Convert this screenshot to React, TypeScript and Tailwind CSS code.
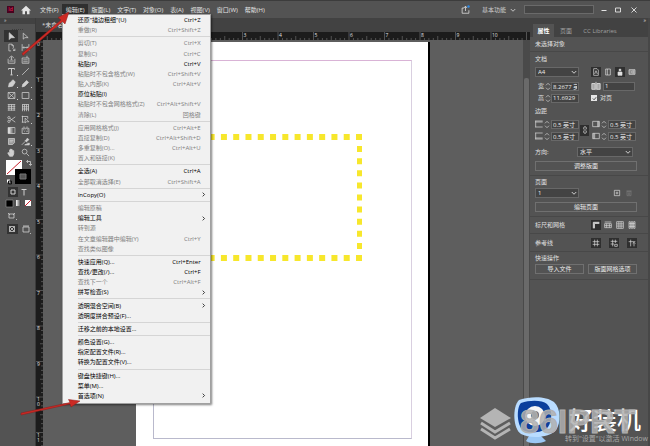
import { useState } from 'react';
import type { ReactNode } from 'react';
import clsx from 'clsx';

type MenuItem = {
  label: string;
  keys?: string;
  disabled?: boolean;
  sub?: boolean;
};

const menus = ['文件(F)', '编辑(E)', '版面(L)', '文字(T)', '对象(O)', '表(A)', '视图(V)', '窗口(W)', '帮助(H)'];

const editMenu: MenuItem[][] = [
  [
    { label: '还原"描边粗细"(U)', keys: 'Ctrl+Z' },
    { label: '重做(R)', keys: 'Ctrl+Shift+Z', disabled: true },
  ],
  [
    { label: '剪切(T)', keys: 'Ctrl+X', disabled: true },
    { label: '复制(C)', keys: 'Ctrl+C', disabled: true },
    { label: '粘贴(P)', keys: 'Ctrl+V' },
    { label: '粘贴时不包含格式(W)', keys: 'Ctrl+Shift+V', disabled: true },
    { label: '贴入内部(K)', keys: 'Ctrl+Alt+V', disabled: true },
    { label: '原位粘贴(I)' },
    { label: '粘贴时不包含网格格式(Z)', keys: 'Ctrl+Alt+Shift+V', disabled: true },
    { label: '清除(L)', keys: '回格键', disabled: true },
  ],
  [
    { label: '应用网格格式(J)', keys: 'Ctrl+Alt+E', disabled: true },
    { label: '直接复制(D)', keys: 'Ctrl+Alt+Shift+D', disabled: true },
    { label: '多重复制(O)...', keys: 'Ctrl+Alt+U', disabled: true },
    { label: '置入和链接(K)', disabled: true },
  ],
  [
    { label: '全选(A)', keys: 'Ctrl+A' },
    { label: '全部取消选择(E)', keys: 'Ctrl+Shift+A', disabled: true },
  ],
  [{ label: 'InCopy(O)', sub: true }],
  [
    { label: '编辑原稿', disabled: true },
    { label: '编辑工具', sub: true },
    { label: '转到源', disabled: true },
    { label: '在文章编辑器中编辑(Y)', keys: 'Ctrl+Y', disabled: true },
    { label: '查找类似图像', disabled: true },
  ],
  [
    { label: '快速应用(Q)...', keys: 'Ctrl+Enter' },
    { label: '查找/更改(/)...', keys: 'Ctrl+F' },
    { label: '查找下一个', keys: 'Ctrl+Alt+F', disabled: true },
    { label: '拼写检查(S)', sub: true },
  ],
  [
    { label: '透明混合空间(B)', sub: true },
    { label: '透明度拼合预设(F)...' },
  ],
  [{ label: '迁移之前的本地设置...' }],
  [
    { label: '颜色设置(G)...' },
    { label: '指定配置文件(R)...' },
    { label: '转换为配置文件(V)...' },
  ],
  [
    { label: '键盘快捷键(H)...' },
    { label: '菜单(M)...' },
    { label: '首选项(N)', sub: true },
  ],
];

// 工具图标统一画在 12x12 的网格上
const tools: { name: string; icon: ReactNode; more?: boolean }[] = [
  { name: '选择', icon: <path d="M3 1v9l2.300-2.300L10 7.500z" fill="currentColor" /> },
  { name: '直接选择', icon: <path d="M3 1.500v8l2.200-2L9.500 7.500z" /> },
  { name: '页面', icon: <path d="M2.500 1.500h4l2 2v3M2.500 1.500v9h3M6.500 1.500v2h2M7.500 7l3 3m0-2.500V10H8" /> },
  { name: '间隙', icon: <path d="M1.500 1.500v9M10.500 1.500v9M2.500 6h7M4 4.500 2.500 6 4 7.500M8 4.500 9.500 6 8 7.500" /> },
  { name: '内容收集器', icon: <path d="M1.500 5v6h9V5M3 8h6M3 3.500l3-2 3 2M6 2v4M4.500 5 6 6.500 7.500 5" /> },
  { name: '内容置入器', icon: <path d="M1.500 4v7h9V4zM3 6.500h6M3 9h6M8 1v3" /> },
  { name: '文字', icon: <path d="M2 3.500V2h8v1.500M6 2v8.500M4.500 10.500h3" strokeWidth="1.300" />, more: true },
  { name: '直线', icon: <path d="M1.500 10.500l9-9" /> },
  { name: '钢笔', icon: <path d="M2 10.500l1-5 3.500-2.500L10 6l-2.500 3.500zM6.500 2.500l1.500-1.500 3 3-1 1.500z" fill="currentColor" />, more: true },
  { name: '铅笔', icon: <path d="M1.500 10.500l1-3.500 5-5 2.500 2.500-5 5z" fill="currentColor" />, more: true },
  { name: '矩形框架', icon: <path d="M1.500 2h9v8h-9zM1.500 2l9 8M10.500 2l-9 8" />, more: true },
  { name: '矩形', icon: <path d="M1.500 2h9v8h-9z" />, more: true },
  { name: '水平网格', icon: <path d="M1 2h10M1 4.500h10M1 7h10M1 9.500h10M2.500 2v8M6 2v8M9.500 2v8" /> },
  { name: '垂直网格', icon: <path d="M1.500 2h9M1.500 5h9M1.500 8h9M2 2v9M4.700 2v9M7.300 2v9M10 2v9" /> },
  { name: '剪刀', icon: <path d="M4 4.500l7 5M4 7.500l7-5M4 3.500a1.500 1.500 0 1 1-3 0 1.500 1.500 0 0 1 3 0zM4 8.500a1.500 1.500 0 1 1-3 0 1.500 1.500 0 0 1 3 0z" /> },
  { name: '自由变换', icon: <path d="M1 2h8M2 1v9M1 9.500h4M9 2v3M5.500 4v6.500L7.500 9h3z" />, more: true },
  { name: '渐变色板', icon: <path d="M1.500 2h9v8h-9z" fill="url(#toolGradient)" /> },
  { name: '渐变羽化', icon: <path d="M1.500 3h9v7h-9zM3 5h1M5 5h1M8 5h1M4 7h1M7 7h2M3 1.500h2M7 1.500h2" /> },
  { name: '附注', icon: <path d="M2 2h8v5.500L7.500 10H2zM3.500 4.500h5M3.500 6.500h4" fill="#9a9a9a" /> },
  { name: '颜色主题', icon: <path d="M1 10.500l5-5M5 4l3 3M6 5l2.500-3.500 2 2L7 6.500M5 10.500h6V8z" fill="currentColor" />, more: true },
  { name: '抓手', icon: <path d="M3.500 11L1 6.500l1-.5 1.500 1.500V2.500h1V6 1.500h1.200V6 2h1.200v4V3.500H9V8l-1.500 3z" fill="currentColor" /> },
  { name: '缩放', icon: <path d="M8 4.800a3.200 3.200 0 1 1-6.400 0 3.200 3.200 0 0 1 6.400 0zM7.200 7.200l3.600 3.600" /> },
];

function Glyph({ children, className }: { children: ReactNode; className?: string }) {
  return (
    <svg viewBox="0 0 12 12" className={clsx('shrink-0', className ?? 'size-[10px]')} fill="none" stroke="currentColor" strokeWidth="1">
      {children}
    </svg>
  );
}

function Chevron({ className }: { className?: string }) {
  return (
    <Glyph className={className ?? 'size-[6px]'}>
      <path d="M1.500 4L6 8.500 10.500 4" strokeWidth="1.800" />
    </Glyph>
  );
}

function EditMenu() {
  return (
    <div
      role="menu"
      className="absolute top-[13px] left-0 z-20 flex h-[390px] w-[149px] flex-col border border-[#a0a0a0] bg-[#f1f1f1] pb-[2px] text-black shadow-[1px_1px_2px_rgba(0,0,0,0.5)]"
    >
      {editMenu.map((group, i) => (
        <div key={i} className="contents">
          {i > 0 && (
            <div className="ml-[15px] flex h-[3px] shrink-0 items-center">
              <div className="h-px w-full bg-[#d5d5d5]" />
            </div>
          )}
          {group.map(item => (
            <button
              key={item.label}
              role="menuitem"
              disabled={item.disabled}
              className={clsx(
                'flex min-h-0 flex-1 items-center justify-between pr-[9px] pl-[15px] whitespace-nowrap',
                item.disabled ? 'text-[#808080]' : 'text-black'
              )}
            >
              <span>{item.label}</span>
              {item.keys && <span>{item.keys}</span>}
              {item.sub && <Chevron className="-mr-[5px] size-[5px] -rotate-90" />}
            </button>
          ))}
        </div>
      ))}
    </div>
  );
}

function MenuBar() {
  const [open, setOpen] = useState('编辑(E)');

  return (
    <header className="flex h-[18px] shrink-0 items-center border-t border-[#3c3c3c] bg-[#535353] text-[#e4e4e4]">
      <div className="ml-[7px] flex size-[7px] items-center justify-center bg-[#49021f] text-[5px] leading-none text-[#ff3366]">Id</div>
      <button aria-label="主页" className="ml-[7px]">
        <svg viewBox="0 0 12 12" className="size-[10px]" fill="currentColor">
          <path d="M6 1L0 6.500h1.800V11h3V7.500h2.400V11h3V6.500H12z" />
        </svg>
      </button>
      <nav className="ml-[5px] flex self-stretch">
        {menus.map(name => (
          <div key={name} className="relative flex items-center">
            <button
              onClick={() => setOpen(open === name ? '' : name)}
              className={clsx('h-[11px] pr-[3px] pl-[4px] whitespace-nowrap', open === name && 'bg-[#2f2f2f]')}
            >
              {name}
            </button>
            {name === '编辑(E)' && open === name && <EditMenu />}
          </div>
        ))}
      </nav>
      <div className="ml-auto flex items-center">
        <button aria-label="共享">
          <Glyph className="size-[9px]">
            <path d="M4 4H1.500v7h9V7M6 8V2M4 4l2-2.500L8 4" />
            <circle cx="10" cy="2" r="1.600" fill="#2d8ceb" stroke="none" />
          </Glyph>
        </button>
        <button className="ml-3 flex items-center gap-1 text-[#cfcfcf]">
          基本功能
          <Chevron />
        </button>
        <input aria-label="搜索" className="mr-[7px] ml-[8px] h-[9px] w-[70px] border border-[#6a6a6a] bg-[#454545] px-1 outline-none" />
        <button aria-label="最小化" className="w-[14px]"><Glyph className="size-[6px]"><path d="M1 7h10" strokeWidth="2" /></Glyph></button>
        <button aria-label="最大化" className="w-[16px]"><Glyph className="size-[6px]"><path d="M1 2h10v8H1z" strokeWidth="1.800" /></Glyph></button>
        <button aria-label="关闭" className="w-[19px]"><Glyph className="size-[6px]"><path d="M1 1l10 10M11 1L1 11" strokeWidth="1.800" /></Glyph></button>
      </div>
    </header>
  );
}

function Toolbox() {
  return (
    <aside className="w-9 shrink-0 border-r border-[#3c3c3c] bg-[#535353] text-[#d0d0d0]">
      <div className="h-[6px] bg-[#424242] pl-[4px] text-[5px] leading-[5px]">»</div>
      <div className="mx-auto mt-px h-[5px] w-[11px] border-b border-dotted border-[#3c3c3c]" />
      <div className="grid grid-cols-2 pr-[3px] pl-1">
        {tools.map((tool, i) => (
          <button
            key={tool.name}
            aria-label={tool.name}
            className={clsx('relative flex h-[11px] items-center justify-center', i < 2 && 'h-[12px]', i === 0 && 'bg-[#333333]', i > 1 && i < 14 && 'mb-px')}
          >
            <Glyph className="size-[9px]">{tool.icon}</Glyph>
            {tool.more && <span className="absolute right-0 bottom-px size-px bg-[#d0d0d0]" />}
          </button>
        ))}
      </div>
      {/* 填色与描边 */}
      <svg width="35" height="80" viewBox="0 0 35 80" fill="none" stroke="#d0d0d0">
        <defs>
          <linearGradient id="toolGradient">
            <stop offset="0" stopColor="#fff" />
            <stop offset="1" stopColor="#333" />
          </linearGradient>
        </defs>
        <path d="M6 2h16v15H6z" fill="#fff" stroke="none" />
        <path d="M7 16L21 3" stroke="#c8202c" />
        <path d="M15 11h16v15H15z" fill="#000" stroke="none" />
        <path d="M20 16h6v5h-6z" fill="#555" stroke="#777" />
        <path d="M27 3.500h3.500V7M28 2l-1.500 1.500L28 5M29 6l1.500 1.500L32 6" strokeWidth="0.800" />
        <path d="M7 21.500h3v3H7z" fill="#fff" stroke="none" />
        <path d="M8.500 23h3v3h-3z" stroke="#111" />
        <path d="M8 29h10v10H8z" fill="#333" stroke="none" />
        <path d="M11 32h4v4h-4z" />
        <path d="M21.500 31.500h5M24 31.500v6" />
        <path d="M6 42h7v7H6z" fill="#000" stroke="#888" strokeWidth="0.700" />
        <path d="M16 42h5v6h-5z" fill="url(#toolGradient)" stroke="none" />
        <path d="M25 42h6v6h-6z" fill="#fff" stroke="none" />
        <path d="M25 48l6-6" stroke="#c8202c" />
        <path d="M9 56h5v4H9zM8 55l2 2M15 55l-2 2M16 61.500h1" strokeWidth="0.800" />
        <path d="M7 66h11v10H7z" fill="#333" stroke="none" />
        <path d="M9.500 68.500h5v5h-5zM9.500 68.500l5 5M14.500 68.500l-5 5" strokeWidth="0.800" />
        <path d="M23 69h6v5h-6zM23 68h6M30 75.500h1" strokeWidth="0.800" />
      </svg>
    </aside>
  );
}

const INCH = 35.5;

function HorizontalRuler() {
  const ticks = Array.from({ length: 110 }, (_, i) => i - 20);
  return (
    <svg className="block h-[8px] w-full bg-[#1c1c1c]" stroke="#8a8a8a" strokeWidth="0.500">
      {ticks.map(i => {
        const x = 100 + (i * INCH) / 8;
        return <path key={i} d={`M${x} ${i % 8 === 0 ? 0 : i % 4 === 0 ? 4 : 6}V8`} />;
      })}
      {[3, 4, 5, 6, 7, 8, 9, 10].map(n => (
        <text key={n} x={101 + n * INCH} y="5" fontSize="5" fill="#e0e0e0" stroke="none">{n}</text>
      ))}
    </svg>
  );
}

function VerticalRuler() {
  const ticks = Array.from({ length: 100 }, (_, i) => i);
  return (
    <svg className="block h-full w-[7px] shrink-0 bg-[#1c1c1c]" stroke="#8a8a8a" strokeWidth="0.500">
      {ticks.map(i => {
        const y = 2 + (i * INCH) / 8;
        return <path key={i} d={`M${i % 8 === 0 ? 0 : i % 4 === 0 ? 4 : 5} ${y}H7`} />;
      })}
      {[0, 1, 2, 3, 4, 5, 6, 7, 8, 9, 10, 11].map(n =>
        String(n).split('').map((digit, k) => (
          <text key={`${n}-${k}`} x="1" y={6 + k * 5 + n * INCH} fontSize="5" fill="#e0e0e0" stroke="none">{digit}</text>
        ))
      )}
    </svg>
  );
}

function DocumentView() {
  return (
    <main className="flex min-w-0 flex-1 flex-col bg-[#424242]">
      <div className="h-[14px] shrink-0 pt-[3px] pl-[6px] whitespace-nowrap text-[#dcdcdc]">*未命名-1</div>
      <HorizontalRuler />
      <div className="flex min-h-0 flex-1">
        <VerticalRuler />
        <div className="relative min-w-0 flex-1 overflow-hidden bg-[#5e5e5e]">
          <div className="absolute top-[2px] left-[93px] h-[420px] w-[294px] border-r-2 border-black bg-white">
            <div className="absolute top-[18px] left-[17px] h-[379px] w-[259px] border border-t-[#d9b3d6] border-r-[#d9cfe0] border-b-[#b9b9cc] border-l-[#b9b9cc]" />
            <svg className="absolute inset-0 size-full" fill="none" stroke="#f7e72c">
              <path d="M226 95H0M226 216H0" strokeWidth="6" strokeDasharray="6 6.280" />
              <path d="M223.500 92v127" strokeWidth="5" strokeDasharray="6 6.100" />
            </svg>
          </div>
        </div>
        <div className="w-[7px] shrink-0 bg-[#4a4a4a] pt-[38px]">
          <div className="mx-px h-full rounded-t-[2px] bg-[#6a6a6a]" />
        </div>
      </div>
    </main>
  );
}

function Spinner() {
  return (
    <svg viewBox="0 0 6 9" className="h-[9px] w-[6px] shrink-0" fill="none" stroke="#c4c4c4" strokeWidth="0.800">
      <path d="M1 3.300L3 1.300l2 2M1 5.700l2 2 2-2" />
    </svg>
  );
}

const inputClass = 'h-[9px] shrink-0 border border-[#686868] bg-[#434343] px-px text-[#ececec] outline-none';

function Dropdown({ label, value, className }: { label: string; value: string; className: string }) {
  return (
    <div className={clsx('relative', className)}>
      <select aria-label={label} className="block h-[10px] w-full appearance-none border border-[#686868] bg-[#434343] px-[2px] leading-[8px] text-[#ececec] outline-none">
        <option>{value}</option>
      </select>
      <Chevron className="pointer-events-none absolute top-[2px] right-[2px] size-[6px]" />
    </div>
  );
}

function IconButton({ label, active, children }: { label: string; active?: boolean; children: ReactNode }) {
  return (
    <button aria-label={label} className={clsx('flex size-[10px] items-center justify-center', active && 'bg-[#2f2f2f]')}>
      <Glyph className="size-[8px]">{children}</Glyph>
    </button>
  );
}

function MarginField({ label, icon }: { label: string; icon: ReactNode }) {
  return (
    <label className="flex h-3 items-center gap-px">
      <Glyph className="size-[8px]">{icon}</Glyph>
      <Spinner />
      <input aria-label={label} defaultValue="0.5 英寸" className={clsx(inputClass, 'w-[28px]')} />
    </label>
  );
}

const buttonClass = 'h-[10px] border border-[#707070] leading-[8px] text-[#ececec]';

function PropertiesPanel() {
  return (
    <aside className="w-[120px] shrink-0 border-r-2 border-[#474747] bg-[#535353] text-[#e0e0e0]">
      <div className="h-[6px] bg-[#424242] pr-[2px] text-right text-[5px] leading-[5px]">»</div>
      <div role="tablist" className="flex h-[13px] bg-[#424242] pl-[3px] text-[#a0a0a0]">
        <button role="tab" aria-selected="true" className="w-[21px] bg-[#535353] font-bold text-white">属性</button>
        <button role="tab" className="w-[24px]">页面</button>
        <button role="tab" className="w-[44px]">CC Libraries</button>
      </div>
      <div className="h-[15px] border-b border-[#484848] px-[5px] leading-[15px]">未选择对象</div>

      <section className="border-b border-[#484848] px-[5px] pb-[4px]">
        <h2 className="leading-[15px]">文档</h2>
        <div className="flex items-center">
          <Dropdown label="页面大小" value="A4" className="w-[44px]" />
          <div className="ml-[12px] flex gap-[2px]">
            <IconButton label="纵向" active><path d="M2.500 1h5l2 2v8h-7zM4 9l2-5 2 5" /></IconButton>
            <IconButton label="横向"><path d="M2.500 1.500h7v9h-7zM5 1.500v9" /></IconButton>
            <IconButton label="从左到右" active><path d="M6 1.500a1.500 1.500 0 1 1 0 3 1.500 1.500 0 0 1 0-3zM3 11V6h6v5z" fill="currentColor" /></IconButton>
            <IconButton label="从右到左"><path d="M1.500 2.500h9v7h-9zM8 4L5 6l3 2z" fill="currentColor" fillOpacity="0.400" /></IconButton>
          </div>
        </div>
        <div className="mt-[3px] flex h-3 items-center">
          <label htmlFor="page-width" className="w-[10px] pl-[3px]">宽</label>
          <Spinner />
          <input id="page-width" defaultValue="8.2677 英" className={clsx(inputClass, 'w-[28px]')} />
          <Glyph className="ml-[12px] size-[10px]"><path d="M1 3h4v7H1zM7 3h4v7H7zM6 1v10" fill="currentColor" fillOpacity="0.600" /></Glyph>
          <input aria-label="页数" defaultValue="1" className={clsx(inputClass, 'ml-[2px] w-[32px]')} />
        </div>
        <div className="flex h-3 items-center">
          <label htmlFor="page-height" className="w-[10px] pl-[3px]">高</label>
          <Spinner />
          <input id="page-height" defaultValue="11.6929" className={clsx(inputClass, 'w-[28px]')} />
          <label className="ml-[12px] flex items-center gap-[3px]">
            <input type="checkbox" defaultChecked className="peer sr-only" />
            <span className="flex size-[6px] items-center justify-center bg-[#e6e6e6] text-[#333333]">
              <Glyph className="size-[5px]"><path d="M2 6l3 3 5-6" strokeWidth="2" /></Glyph>
            </span>
            对页
          </label>
        </div>

        <h3 className="pt-px leading-[13px]">边距</h3>
        <div className="flex items-center">
          <div>
            <MarginField label="上边距" icon={<path d="M.500 1.500h11M.500 3h11M.500 10.500h11M1 1v10" />} />
            <MarginField label="下边距" icon={<path d="M.500 1.500h11M.500 9h11M.500 10.500h11M1 1v10" />} />
          </div>
          <button aria-label="将所有设置设为相同" className="mx-px flex h-[11px] w-[9px] items-center justify-center bg-[#2f2f2f]">
            <Glyph className="size-[8px]"><path d="M4 5V3a2 2 0 0 1 4 0v2M4 7v2a2 2 0 0 0 4 0V7M6 4v4" /></Glyph>
          </button>
          <div className="ml-[2px]">
            <MarginField label="内边距" icon={<path d="M1 2h10v8H1zM8.500 2v8M10 2v8" />} />
            <MarginField label="外边距" icon={<path d="M1 2h10v8H1zM2.500 2v8M4 2v8" />} />
          </div>
        </div>

        <div className="mt-1 flex h-3 items-center justify-between pr-[10px]">
          <span>方向:</span>
          <Dropdown label="方向" value="水平" className="w-[56px]" />
        </div>
        <button className={clsx(buttonClass, 'mt-[3px] block w-[102px]')}>调整版面</button>
      </section>

      <section className="border-b border-[#484848] px-[5px] pb-[4px]">
        <h2 className="leading-[12px]">页面</h2>
        <div className="flex items-center">
          <Dropdown label="当前页面" value="1" className="w-[44px]" />
          <div className="ml-[33px] flex gap-[3px]">
            <IconButton label="新建页面"><path d="M2 2h8v8H2zM6 4v4M4 6h4" /></IconButton>
            <button aria-label="删除页面" disabled className="text-[#7c7c7c]">
              <Glyph className="size-[8px]"><path d="M3 3.500h6V10H3zM2 3h8M5 5v4M7 5v4" /></Glyph>
            </button>
          </div>
        </div>
        <button className={clsx(buttonClass, 'mt-[4px] block w-[102px]')}>编辑页面</button>
      </section>

      <section className="flex h-[17px] items-center justify-between border-b border-[#484848] pr-[11px] pl-[5px]">
        <span>标尺和网格</span>
        <div className="flex gap-[2px]">
          <IconButton label="标尺" active><path d="M2 11V2h9M3.500 11V3.500H11" strokeWidth="1.500" /></IconButton>
          <IconButton label="基线网格"><path d="M1 1.500h10M1 4h10v6H1zM1 7h10M4 4v6M8 4v6" /></IconButton>
          <IconButton label="文档网格"><path d="M1 1h10v10H1zM1 4.300h10M1 7.600h10M4.300 1v10M7.600 1v10" /></IconButton>
          <IconButton label="版面网格"><path d="M1.500 1h2v10h-2zM5 1h2v10H5zM8.500 1h2v10h-2zM1.500 4h9M1.500 8h9" /></IconButton>
        </div>
      </section>

      <section className="flex h-[18px] items-center justify-between border-b border-[#484848] pr-[11px] pl-[5px]">
        <span>参考线</span>
        <div className="flex gap-[8px]">
          <IconButton label="显示参考线" active><path d="M4 1v10M8 1v10M1 4h10M1 8h10" /></IconButton>
          <IconButton label="锁定参考线" active><path d="M4 1v10M8 1v5M1 3.500h10M1 7.500h5M7 8h4v3H7z" /></IconButton>
          <IconButton label="智能参考线" active><path d="M4 1v10M1 4h10M9 5v6M7 7l2-2 2 2" /></IconButton>
        </div>
      </section>

      <section className="border-b border-[#484848] px-[5px] pb-[5px]">
        <h2 className="leading-[12px]">快速操作</h2>
        <div className="flex gap-[4px]">
          <button className={clsx(buttonClass, 'w-[49px]')}>导入文件</button>
          <button className={clsx(buttonClass, 'w-[49px]')}>版面网格选项</button>
        </div>
      </section>
    </aside>
  );
}

// 指向菜单首尾的红色箭头
function Arrows() {
  return (
    <svg className="pointer-events-none absolute inset-0 z-30 size-full" stroke="#8a1a1a" strokeWidth="0.500" fill="#cc2a24">
      <path d="M22 53.500L61 20l-3-2.500L69 12l-4 12-2.500-2.500L23 55.500z" />
      <path d="M21 413l49-10.500-1.500-3L80 401l-9 6-1-3L21 415z" />
    </svg>
  );
}

function Watermark() {
  return (
    <div className="pointer-events-none absolute right-0 bottom-0 z-30 h-[50px] w-[172px] overflow-hidden">
      <svg className="absolute top-0 left-0" width="172" height="50" fill="none">
        <path d="M2 22l15-10 16 10-16 9z" fill="#b4b4b4" />
        <path d="M3 27l14 9 15-9M3 33l14 9 15-9" stroke="#b4b4b4" strokeWidth="3" />
        <path d="M51 40h12l5 5c-6 3-16 3-20 0z" fill="#9cc8f5" />
        <path d="M41 4c12-4 27-4 35 2 7 6 7 21 2 28-6 8-26 9-35 4-8-5-9-27-2-34z" fill="#b9dcff" />
        <path d="M43 7c9-3 21-3 26 1 6 6 5 17 1 23-5 6-19 7-25 3-6-4-7-22-2-27z" fill="#0b3f9c" />
        <circle cx="57" cy="20" r="10" fill="#f6f6f6" />
        <circle cx="57" cy="19" r="4" fill="#667080" />
      </svg>
      <div className="absolute top-[10px] left-[91px] text-[24px] leading-[28px] font-medium whitespace-nowrap text-white">好装机</div>
      <div className="absolute top-[8px] left-[42px] font-['Liberation_Sans',sans-serif] text-[34px] leading-[34px] font-bold whitespace-nowrap text-[#b0b0b0]/85 [-webkit-text-stroke:1px_#b0b0b0]">86IPRT</div>
      <div className="absolute top-[38px] left-[87px] text-[7px] leading-[10px] whitespace-nowrap text-[#a8a8a8]">转到"设置"以激活 Window</div>
    </div>
  );
}

export default function App() {
  return (
    <div className="relative flex h-screen flex-col overflow-hidden bg-[#535353] font-['Open_Sans','Noto_Sans_CJK_SC',sans-serif] text-[6px] leading-[8px]">
      <MenuBar />
      <div className="flex min-h-0 flex-1">
        <Toolbox />
        <DocumentView />
        <PropertiesPanel />
      </div>
      <Arrows />
      <Watermark />
    </div>
  );
}
